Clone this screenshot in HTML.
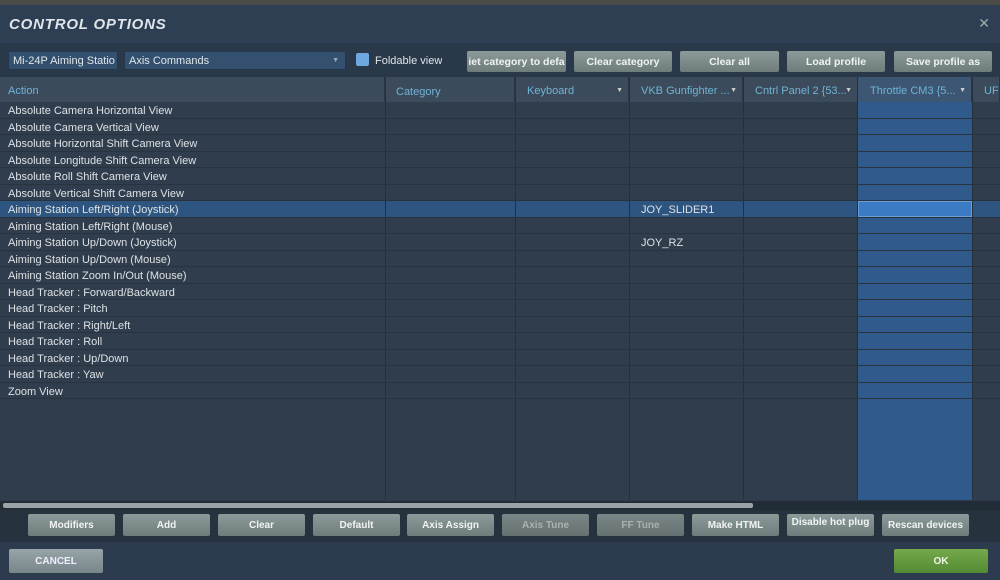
<!DOCTYPE html>
<html><head><style>
*{box-sizing:border-box;margin:0;padding:0}
body{width:1000px;height:580px;overflow:hidden;background:#2c3b4d;font-family:"Liberation Sans",sans-serif;color:#d8dde2;position:relative}
.abs{position:absolute;white-space:nowrap;overflow:hidden}
.top{left:0;top:0;width:1000px;height:5px;background:#4a4a46}
.title{left:0;top:5px;width:1000px;height:38px;background:#2e3f53}
.title span{position:absolute;left:9px;top:11px;font-size:15px;font-weight:bold;font-style:italic;color:#dfe5ea;letter-spacing:.8px}
.x{right:10px;top:15px;font-size:14px;color:#9aa}
.tb{left:0;top:43px;width:1000px;height:34px;background:#2a394a}
.sel{top:51px;height:19px;background:#34506f;border:1px solid #23364b;font-size:11px;padding:3px 4px;color:#e0e6ea}
.btn{top:51px;height:21px;background:linear-gradient(#8c9a9a,#6e7c7c);border-radius:2px;font-size:10.5px;font-weight:bold;color:#f0f2f2;text-align:center;line-height:22px}
.hdr{left:0;top:77px;width:1000px;height:25px;background:#3c4b5b}
.hc{position:absolute;top:77px;height:25px;font-size:11px;color:#6fb3d6;padding:8px 0 0 8px;border-right:1px solid #2a3644;white-space:nowrap;overflow:hidden}
.rows{left:0;top:102px;width:1000px;height:398px;background:#303d4c}
.row{position:absolute;left:0;width:1000px;height:16.5px;border-bottom:1px solid #28333f;font-size:11px;padding:3px 0 0 8px;color:#dde2e6;white-space:nowrap}
.vl{position:absolute;top:77px;height:423px;width:1px;background:#25303c}
.bb{top:514px;height:22px;background:linear-gradient(#8c9a9a,#6e7c7c);border-radius:2px;font-size:10px;font-weight:bold;color:#f2f4f4;text-align:center;line-height:23px;width:87px;white-space:nowrap;overflow:hidden}
.dis{color:#a8b2b2;background:linear-gradient(#7a8686,#667272)}
.ar{position:absolute;right:5px;top:10px;font-size:7px;color:#ccc}
</style></head><body>
<div class="abs top"></div>
<div class="abs title"><span>CONTROL OPTIONS</span></div>
<div class="abs x">✕</div>
<div class="abs tb"></div>
<div class="abs sel" style="left:8px;width:110px">Mi-24P Aiming Statio <span style="font-size:7px;color:#9ab">▼</span></div>
<div class="abs sel" style="left:124px;width:222px">Axis Commands<span style="position:absolute;right:6px;top:5px;font-size:7px;color:#9ab">▼</span></div>
<div class="abs" style="left:356px;top:53px;width:13px;height:13px;background:#6fa7e0;border-radius:2px"></div>
<div class="abs" style="left:375px;top:55px;font-size:11px;color:#dfe4e8">Foldable view</div>
<div class="abs btn" style="left:467px;width:99px">iet category to defa</div>
<div class="abs btn" style="left:574px;width:98px">Clear category</div>
<div class="abs btn" style="left:680px;width:99px">Clear all</div>
<div class="abs btn" style="left:787px;width:98px">Load profile</div>
<div class="abs btn" style="left:894px;width:98px">Save profile as</div>
<div class="abs hdr"></div>
<div class="abs rows"></div>
<div class="abs" style="left:858px;top:77px;width:114px;height:423px;background:#2f5a8b"></div>
<div class="abs" style="left:858px;top:77px;width:114px;height:25px;background:#3c5673"></div>
<div class="abs" style="left:0;top:201px;width:1000px;height:16.5px;background:#2d5580"></div>
<div class="abs" style="left:858px;top:201px;width:114px;height:16px;background:#3a7bc4;border:1px solid #6a9fd6"></div>
<div class="hc" style="left:0;width:385px">Action</div>
<div class="hc" style="left:385px;width:130px;padding-top:9px;padding-left:11px">Category</div>
<div class="hc" style="left:515px;width:114px;padding-left:12px">Keyboard<span class="ar">▼</span></div>
<div class="hc" style="left:629px;width:114px;padding-left:12px">VKB Gunfighter ...<span class="ar">▼</span></div>
<div class="hc" style="left:743px;width:115px;padding-left:12px">Cntrl Panel 2 {53...<span class="ar">▼</span></div>
<div class="hc" style="left:858px;width:114px;padding-left:12px">Throttle CM3 {5...<span class="ar">▼</span></div>
<div class="hc" style="left:972px;width:28px;padding-left:12px">UFC</div>
<div class="vl" style="left:385px"></div><div class="vl" style="left:515px"></div><div class="vl" style="left:629px"></div><div class="vl" style="left:743px"></div><div class="vl" style="left:857px"></div><div class="vl" style="left:972px"></div>
<div class="row" style="top:102px">Absolute Camera Horizontal View</div>
<div class="row" style="top:118.5px">Absolute Camera Vertical View</div>
<div class="row" style="top:135px">Absolute Horizontal Shift Camera View</div>
<div class="row" style="top:151.5px">Absolute Longitude Shift Camera View</div>
<div class="row" style="top:168px">Absolute Roll Shift Camera View</div>
<div class="row" style="top:184.5px">Absolute Vertical Shift Camera View</div>
<div class="row" style="top:201px">Aiming Station Left/Right (Joystick)<span style="position:absolute;left:641px">JOY_SLIDER1</span></div>
<div class="row" style="top:217.5px">Aiming Station Left/Right (Mouse)</div>
<div class="row" style="top:234px">Aiming Station Up/Down (Joystick)<span style="position:absolute;left:641px">JOY_RZ</span></div>
<div class="row" style="top:250.5px">Aiming Station Up/Down (Mouse)</div>
<div class="row" style="top:267px">Aiming Station Zoom In/Out (Mouse)</div>
<div class="row" style="top:283.5px">Head Tracker : Forward/Backward</div>
<div class="row" style="top:300px">Head Tracker : Pitch</div>
<div class="row" style="top:316.5px">Head Tracker : Right/Left</div>
<div class="row" style="top:333px">Head Tracker : Roll</div>
<div class="row" style="top:349.5px">Head Tracker : Up/Down</div>
<div class="row" style="top:366px">Head Tracker : Yaw</div>
<div class="row" style="top:382.5px">Zoom View</div>
<div class="abs" style="left:0;top:501px;width:1000px;height:9px;background:#222c37"></div>
<div class="abs" style="left:3px;top:503px;width:750px;height:5px;background:#9aa3a8;border-radius:2px"></div>
<div class="abs" style="left:0;top:510px;width:1000px;height:32px;background:#26333f"></div>
<div class="abs bb" style="left:28px">Modifiers</div>
<div class="abs bb" style="left:123px">Add</div>
<div class="abs bb" style="left:218px">Clear</div>
<div class="abs bb" style="left:313px">Default</div>
<div class="abs bb" style="left:407px">Axis Assign</div>
<div class="abs bb dis" style="left:502px">Axis Tune</div>
<div class="abs bb dis" style="left:597px">FF Tune</div>
<div class="abs bb" style="left:692px">Make HTML</div>
<div class="abs bb" style="left:787px;line-height:18px">Disable hot plug</div>
<div class="abs bb" style="left:882px">Rescan devices</div>
<div class="abs" style="left:9px;top:549px;width:94px;height:24px;background:linear-gradient(#97a5a8,#78868a);border-radius:2px;font-size:10px;font-weight:bold;color:#eef;text-align:center;line-height:25px">CANCEL</div>
<div class="abs" style="left:894px;top:549px;width:94px;height:24px;background:linear-gradient(#74a94a,#548a34);border-radius:2px;font-size:10px;font-weight:bold;color:#f0f4ea;text-align:center;line-height:25px">OK</div>
</body></html>
